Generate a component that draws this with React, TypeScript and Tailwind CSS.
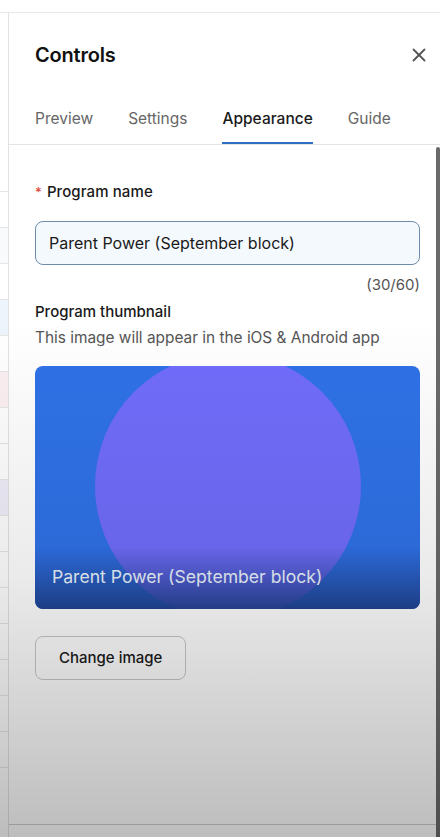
import React from "react";
import { X } from "lucide-react";

const stripRows = [
  "bg-white",
  "bg-gray-50",
  "bg-white",
  "bg-[#eef4fc]",
  "bg-white",
  "bg-[#fcf0f3]",
  "bg-white",
  "bg-white",
  "bg-[#f0eefa]",
  "bg-white",
  "bg-white",
  "bg-white",
  "bg-white",
  "bg-white",
  "bg-white",
  "bg-white",
  "bg-white",
];

const tabs = ["Preview", "Settings", "Appearance", "Guide"];

const App = () => {
  return (
    <div
      className="relative w-[440px] h-[837px] overflow-hidden bg-white flex flex-col"
      style={{ fontFamily: "Inter, 'Noto Sans', sans-serif" }}
    >
      <div className="h-[13px] shrink-0 border-b border-[#e8e8e8] bg-white" />
      <div className="flex flex-1 min-h-0">
        {/* page behind the drawer */}
        <div className="w-[8px] shrink-0 flex flex-col pt-[178px]">
          {stripRows.map((c, i) => (
            <div key={i} className={`h-[36px] border-t border-[#e6e6e6] ${c}`} />
          ))}
        </div>

        {/* drawer */}
        <div className="flex-1 flex flex-col border-l border-[#e2e2e2] bg-white min-w-0">
          <div className="flex items-center justify-between pl-[26px] pr-[10px] pt-[27px]">
            <h2 className="text-[20px] font-semibold text-[#111] tracking-[-0.2px]">Controls</h2>
            <X className="w-[22px] h-[22px] text-[#555]" strokeWidth={2} />
          </div>

          <div className="flex gap-[35px] pl-[26px] mt-[37px] border-b border-[#e4e4e4]">
            {tabs.map((t) => (
              <div key={t} className="flex flex-col items-center">
                <span
                  className={`text-[15.5px] pb-[12px] ${
                    t === "Appearance" ? "text-[#1a1a1a] font-medium" : "text-[#666]"
                  }`}
                >
                  {t}
                </span>
                <div className={`h-[2px] w-full ${t === "Appearance" ? "bg-[#2f6fbf]" : "bg-transparent"}`} />
              </div>
            ))}
          </div>

          <div className="flex flex-1 min-h-0">
            <div className="flex-1 flex flex-col pl-[26px] pr-[16px] pt-[36px]">
              <label className="flex items-center gap-[5px] text-[15px] font-medium text-[#1a1a1a] tracking-[0.1px]">
                <span className="text-[#e0463b] text-[13px]">*</span>
                Program name
              </label>
              <div className="mt-[17px] h-[44px] rounded-[8px] border border-[#6e8ca8] bg-[#f4f9fd] flex items-center px-[13px] text-[16px] text-[#1a1a1a]">
                Parent Power (September block)
              </div>
              <div className="text-right text-[15px] text-[#555] mt-[9px]">(30/60)</div>

              <div className="text-[15px] font-medium text-[#1a1a1a] mt-[5px]">Program thumbnail</div>
              <div className="text-[15.4px] text-[#555] mt-[2px]">
                This image will appear in the iOS &amp; Android app
              </div>

              <div className="relative mt-[17px] h-[243px] rounded-[8px] bg-[#2f72e8] overflow-hidden flex items-center justify-center">
                <div className="w-[266px] h-[266px] rounded-full bg-[#716dfc] mt-[-2px]" />
                <div className="absolute inset-x-0 bottom-0 h-[62px] bg-gradient-to-b from-transparent to-[#1e3f8a]/90 flex items-end px-[17px] pb-[18px]">
                  <span className="text-[17.6px] text-[#e8f1fb]">Parent Power (September block)</span>
                </div>
              </div>

              <div className="mt-[27px]">
                <button className="h-[44px] px-[23px] rounded-[8px] border border-[#c8c8c8] bg-white text-[15px] font-medium text-[#1a1a1a]">
                  Change image
                </button>
              </div>

              <div className="flex-1" />
              <div className="h-[13px] border-t border-[#cfcfcf] -ml-[26px] -mr-[16px]" />
            </div>
            <div className="w-[4px] shrink-0 bg-[#6a6a6a] rounded-t-[3px] mt-[2px]" />
          </div>
        </div>
      </div>

      {/* screen vignette from the recording */}
      <div className="pointer-events-none absolute inset-x-0 bottom-0 h-[520px] bg-gradient-to-b from-transparent via-black/[0.08] to-black/[0.26]" />
    </div>
  );
};

export default App;
